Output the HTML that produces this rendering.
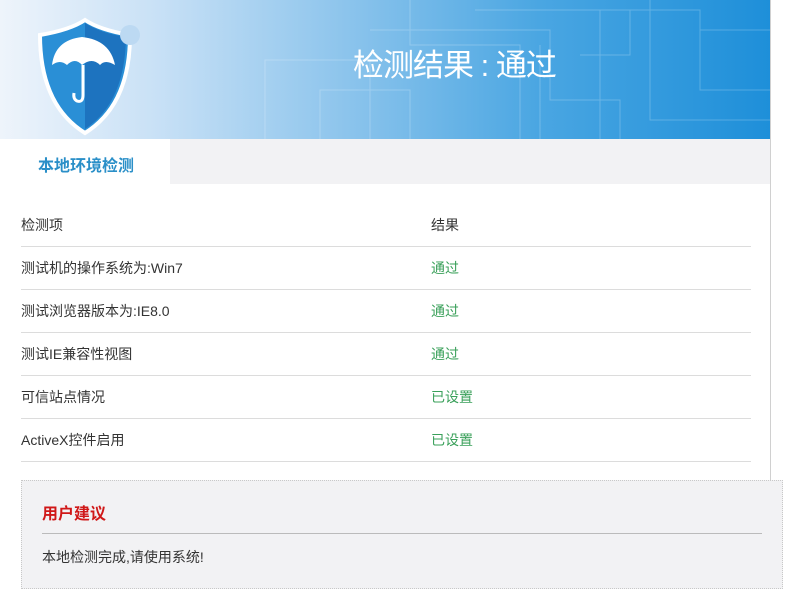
<!DOCTYPE html>
<html><head><meta charset="utf-8"><style>
body{margin:0;width:786px;height:588px;overflow:hidden;background:#fff;font-family:"Liberation Sans","Noto Sans CJK SC",sans-serif;position:relative}
.hdr{position:absolute;left:0;top:0;width:770px;height:139px;background:linear-gradient(90deg,#eef4fb 0%,#c9e1f6 20%,#8cc4ec 45%,#4aa6e2 70%,#1e8fd9 100%);overflow:hidden}
.title{position:absolute;left:353px;top:40px;color:#fff;font-size:31px;letter-spacing:-1px}
.vr{position:absolute;left:770px;top:0;width:1px;height:480px;background:#d0d0d0}
.tabrow{position:absolute;left:170px;top:139px;width:600px;height:45px;background:#f2f2f4}
.tab{position:absolute;left:38px;top:152px;color:#2a8fc8;font-size:16px;font-weight:bold}
.row{position:absolute;left:21px;width:730px;height:42px;border-bottom:1px solid #dcdcdc;font-size:14px;color:#333}
.row span{position:absolute;top:11px}
.row .r{left:410px;color:#3aa05a}
.adv{position:absolute;left:21px;top:480px;width:760px;height:107px;background:#f2f2f4;border:1px dotted #c8c8c8}
.at{position:absolute;left:20px;top:19px;color:#d01818;font-size:16px;font-weight:bold}
.al{position:absolute;left:20px;top:52px;width:720px;height:1px;background:#bbb}
.ax{position:absolute;left:20px;top:66px;font-size:14px;color:#333}
</style></head><body>
<div class="hdr">
<svg width="770" height="139" style="position:absolute;left:0;top:0" fill="none" stroke="rgba(255,255,255,0.22)" stroke-width="1">
<path d="M265 139V60H370V139M320 139V90H410V139M370 30H550V100H620V139M475 10H630V55H580M410 0V45H520V139M540 139V45M600 139V10H700V90H770M650 0V120H770M700 30H770"/>
</svg>
<svg width="130" height="139" style="position:absolute;left:30px;top:15px">
<path d="M10 20 Q40 15 55 5 Q70 15 100 20 Q100 90 55 118 Q10 90 10 20Z" fill="#2a8fd6" stroke="#fff" stroke-width="4"/>
<path d="M55 8 Q70 18 96 22 Q95 88 55 114Z" fill="#1d73bf"/>
<path d="M22 50 Q25 25 52 22 Q80 25 85 50 Q75 44 70 50 Q62 42 52 50 Q45 42 37 50 Q30 44 22 50Z" fill="#fff"/>
<path d="M53 50 V80 Q53 88 47 86 Q43 84 44 78" stroke="#fff" stroke-width="3" fill="none"/>
<circle cx="100" cy="20" r="10" fill="#bcd9f2"/>
</svg>
<div class="title">检测结果 : 通过</div>
</div>
<div class="vr"></div>
<div class="tabrow"></div>
<div class="tab">本地环境检测</div>
<div class="row" style="top:204px"><span>检测项</span><span class="r" style="color:#333">结果</span></div>
<div class="row" style="top:247px"><span>测试机的操作系统为:Win7</span><span class="r">通过</span></div>
<div class="row" style="top:290px"><span>测试浏览器版本为:IE8.0</span><span class="r">通过</span></div>
<div class="row" style="top:333px"><span>测试IE兼容性视图</span><span class="r">通过</span></div>
<div class="row" style="top:376px"><span>可信站点情况</span><span class="r">已设置</span></div>
<div class="row" style="top:419px"><span>ActiveX控件启用</span><span class="r">已设置</span></div>
<div class="adv"><div class="at">用户建议</div><div class="al"></div><div class="ax">本地检测完成,请使用系统!</div></div>
</body></html>
